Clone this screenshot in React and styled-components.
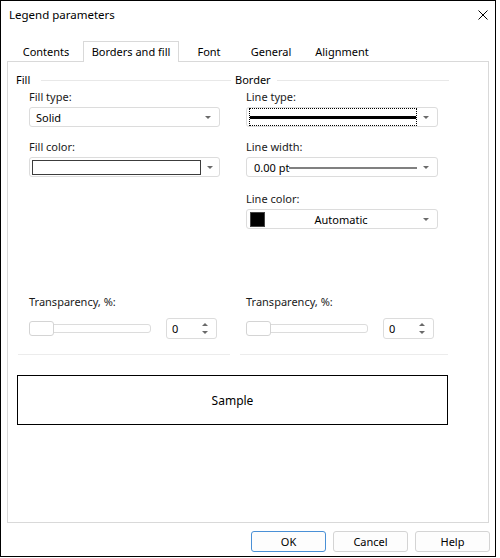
import React from "react";
import styled, { createGlobalStyle } from "styled-components";

const Global = createGlobalStyle`
  html, body { margin: 0; padding: 0; background: #fff; }
  * { box-sizing: border-box; }
`;

const Window = styled.div`
  width: 496px;
  height: 557px;
  border: 1px solid #000;
  background: #fff;
  display: flex;
  flex-direction: column;
  font-family: "Noto Sans", "Open Sans", sans-serif;
  font-size: 11px;
  color: #000;
`;

const TitleBar = styled.div`
  height: 28px;
  display: flex;
  align-items: center;
  justify-content: space-between;
  padding: 0 6px 0 8px;
`;

const Title = styled.div`
  font-size: 11.5px;
  line-height: 16px;
`;

const CloseBtn = styled.div`
  width: 12px;
  height: 12px;
  display: flex;
  align-items: center;
  justify-content: center;
`;

const TabsRow = styled.div`
  display: flex;
  align-items: flex-end;
  height: 20px;
  margin: 12px 0 0 8px;
  position: relative;
  z-index: 1;
`;

const Tab = styled.div`
  width: ${(p) => p.$w}px;
  height: ${(p) => (p.$active ? 21 : 19)}px;
  margin-bottom: ${(p) => (p.$active ? -1 : 0)}px;
  display: flex;
  align-items: center;
  justify-content: center;
  padding-bottom: ${(p) => (p.$active ? 2 : 2)}px;
  line-height: 15px;
  background: #fff;
  border: ${(p) => (p.$active ? "1px solid #d9d9d9" : "1px solid transparent")};
  border-bottom: none;
`;

const Panel = styled.div`
  height: 462px;
  margin: 0 6px;
  border: 1px solid #d9d9d9;
  display: flex;
  flex-direction: column;
  padding: 10px 0 0 8px;
`;

const ColumnsGrid = styled.div`
  display: grid;
  grid-template-columns: 215px 214px;
  column-gap: 4px;
  align-items: start;
  margin-top: ${(p) => p.$mt || 0}px;
`;

const Column = styled.div`
  display: flex;
  flex-direction: column;
`;

const GroupHeader = styled.div`
  display: flex;
  align-items: center;
  line-height: 15px;
  height: 15px;
`;

const HeaderLine = styled.div`
  flex: 1;
  height: 1px;
  background: #e8e8e8;
  margin-left: ${(p) => p.$gap}px;
  margin-top: 1px;
`;

const Field = styled.div`
  display: flex;
  flex-direction: column;
  margin-left: ${(p) => p.$indent}px;
  margin-top: ${(p) => p.$mt}px;
`;

const Label = styled.div`
  line-height: 15px;
  height: 15px;
  margin-bottom: ${(p) => (p.$mb != null ? p.$mb : 3)}px;
  color: #1a1a1a;
`;

const Combo = styled.div`
  width: ${(p) => p.$w}px;
  height: 20px;
  border: 1px solid #dcdcdc;
  border-radius: 3px;
  background: #fff;
  display: flex;
  align-items: center;
  padding: 0 8px 0 ${(p) => (p.$pl != null ? p.$pl : 6)}px;
`;

const ComboText = styled.div`
  flex: 1;
  line-height: 15px;
  display: flex;
  align-items: center;
`;

const TextPart = styled.span`
  flex: ${(p) => (p.$grow ? 1 : "none")};
  text-align: ${(p) => (p.$center ? "center" : "left")};
  line-height: 15px;
`;

const ArrowBox = styled.div`
  width: 6px;
  margin-left: 6px;
  display: flex;
  align-items: center;
`;

const ColorBox = styled.div`
  width: 169px;
  height: 15px;
  border: 1px solid #3c3c3c;
  background: #fff;
`;

const FocusRect = styled.div`
  width: 168px;
  height: 18px;
  border: 1px dotted #000;
  display: flex;
  align-items: center;
`;

const ThickLine = styled.div`
  flex: 1;
  height: 3px;
  background: #000;
`;

const WidthLine = styled.div`
  flex: 1;
  height: 2px;
  background: #808080;
  margin-top: 1px;
`;

const Swatch = styled.div`
  width: 15px;
  height: 15px;
  background: #000;
  border: 1px solid #444;
`;

const SliderRow = styled.div`
  display: flex;
  align-items: center;
  height: 21px;
  gap: 15px;
`;

const Track = styled.div`
  width: 122px;
  height: 9px;
  border: 1px solid #dcdcdc;
  border-radius: 3px;
  display: flex;
  align-items: center;
`;

const Thumb = styled.div`
  width: 25px;
  height: 15px;
  margin-left: -1px;
  border: 1px solid #d4d4d4;
  border-radius: 3px;
  background: #fff;
`;

const Spin = styled.div`
  width: 51px;
  height: 21px;
  border: 1px solid #dcdcdc;
  border-radius: 3px;
  display: flex;
  align-items: center;
  padding: 0 8px 0 5px;
`;

const SpinValue = styled.div`
  flex: 1;
  line-height: 15px;
`;

const SpinArrows = styled.div`
  display: flex;
  flex-direction: column;
  gap: 5px;
`;

const Separator = styled.div`
  height: 1px;
  background: #ececec;
  margin: 15px ${(p) => p.$mr}px 0 ${(p) => p.$ml}px;
`;

const SampleBox = styled.div`
  width: 431px;
  height: 50px;
  margin: 20px 0 0 1px;
  border: 1px solid #000;
  display: flex;
  align-items: center;
  justify-content: center;
  font-size: 12px;
`;

const Footer = styled.div`
  display: flex;
  justify-content: flex-end;
  gap: 7px;
  padding-right: 5px;
  margin-top: 8px;
`;

const Button = styled.div`
  width: 75px;
  height: 21px;
  border: 1px solid ${(p) => (p.$primary ? "#4a90d6" : "#d4d4d4")};
  border-radius: 3px;
  background: #fdfdfd;
  display: flex;
  align-items: center;
  justify-content: center;
  line-height: 15px;
`;

const Arrow = ({ up }) => (
  <svg width="6" height="3" viewBox="0 0 6 3">
    <polygon points={up ? "0,3 6,3 3,0" : "0,0 6,0 3,3"} fill="#6a6a6a" />
  </svg>
);

const DropArrow = () => (
  <ArrowBox>
    <Arrow />
  </ArrowBox>
);

const Transparency = ({ indent, sepL, sepR }) => (
  <Column>
    <Field $indent={indent} $mt={0}>
      <Label $mb={9}>Transparency, %:</Label>
      <SliderRow>
        <Track>
          <Thumb />
        </Track>
        <Spin>
          <SpinValue>0</SpinValue>
          <SpinArrows>
            <Arrow up />
            <Arrow />
          </SpinArrows>
        </Spin>
      </SliderRow>
    </Field>
    <Separator $ml={sepL} $mr={sepR} />
  </Column>
);

export default function App() {
  return (
    <>
      <Global />
      <Window>
        <TitleBar>
          <Title>Legend parameters</Title>
          <CloseBtn>
            <svg width="10" height="10" viewBox="0 0 10 10">
              <path d="M0.5 0.5 L9.5 9.5 M9.5 0.5 L0.5 9.5" stroke="#000" strokeWidth="1" />
            </svg>
          </CloseBtn>
        </TitleBar>
        <TabsRow>
          <Tab $w={74}>Contents</Tab>
          <Tab $w={96} $active>Borders and fill</Tab>
          <Tab $w={60}>Font</Tab>
          <Tab $w={64}>General</Tab>
          <Tab $w={78}>Alignment</Tab>
        </TabsRow>
        <Panel>
          <ColumnsGrid>
            <Column>
              <GroupHeader>
                Fill
                <HeaderLine $gap={11} />
              </GroupHeader>
              <Field $indent={13} $mt={2}>
                <Label>Fill type:</Label>
                <Combo $w={191}>
                  <ComboText>Solid</ComboText>
                  <DropArrow />
                </Combo>
              </Field>
              <Field $indent={13} $mt={12}>
                <Label>Fill color:</Label>
                <Combo $w={191} $pl={2}>
                  <ComboText>
                    <ColorBox />
                  </ComboText>
                  <DropArrow />
                </Combo>
              </Field>
            </Column>
            <Column>
              <GroupHeader>
                Border
                <HeaderLine $gap={6} />
              </GroupHeader>
              <Field $indent={11} $mt={2}>
                <Label>Line type:</Label>
                <Combo $w={192} $pl={2}>
                  <ComboText>
                    <FocusRect>
                      <ThickLine />
                    </FocusRect>
                  </ComboText>
                  <DropArrow />
                </Combo>
              </Field>
              <Field $indent={11} $mt={12}>
                <Label>Line width:</Label>
                <Combo $w={192} $pl={7}>
                  <ComboText>
                    <TextPart>0.00 pt</TextPart>
                    <WidthLine />
                  </ComboText>
                  <DropArrow />
                </Combo>
              </Field>
              <Field $indent={11} $mt={14}>
                <Label>Line color:</Label>
                <Combo $w={192} $pl={3}>
                  <Swatch />
                  <ComboText>
                    <TextPart $grow $center>Automatic</TextPart>
                  </ComboText>
                  <DropArrow />
                </Combo>
              </Field>
            </Column>
          </ColumnsGrid>
          <ColumnsGrid $mt={65}>
            <Transparency indent={13} sepL={2} sepR={1} />
            <Transparency indent={11} sepL={5} sepR={1} />
          </ColumnsGrid>
          <SampleBox>Sample</SampleBox>
        </Panel>
        <Footer>
          <Button $primary>OK</Button>
          <Button>Cancel</Button>
          <Button>Help</Button>
        </Footer>
      </Window>
    </>
  );
}
